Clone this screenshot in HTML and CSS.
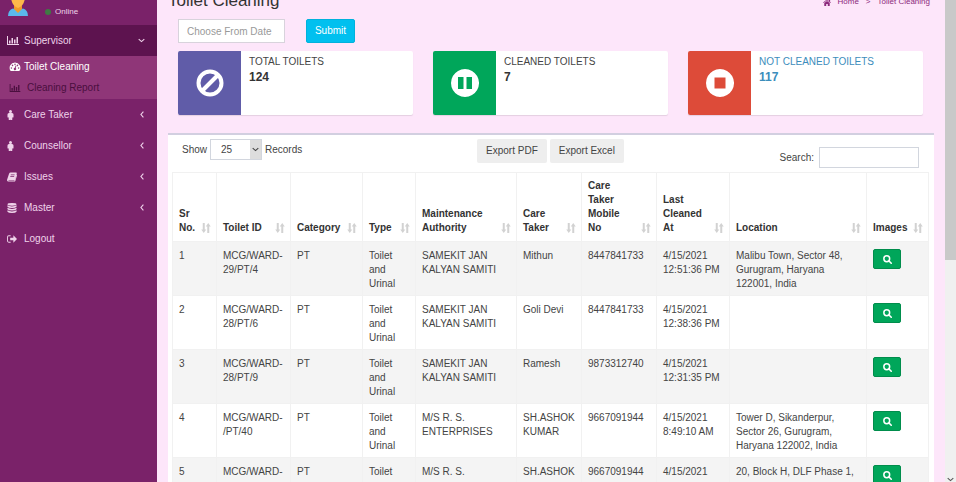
FILE: index.html
```html
<!DOCTYPE html>
<html lang="en">
<head>
<meta charset="utf-8">
<title>Toilet Cleaning</title>
<link rel="stylesheet" href="styles.css">
</head>
<body>
<svg class="sprite" aria-hidden="true">
  <symbol id="chart" viewBox="0 0 24 18"><path d="M0 0h2v16h22v2H0zM4 9h3v6H4zM9 4h3v11H9zM14 7h3v8h-3zM19 2h3v13h-3z"/></symbol>
  <symbol id="gauge" viewBox="0 0 24 20"><path fill-rule="evenodd" d="M12 1a12 12 0 0 1 10 18.500q-.3.500-1 .500H3q-.7 0-1-.500A12 12 0 0 1 12 1zM4 11.500a1.600 1.600 0 1 0 .01 0zM6.500 5.800a1.600 1.600 0 1 0 .01 0zM12 3.400a1.600 1.600 0 1 0 .01 0zM17.500 5.800a1.600 1.600 0 1 0 .01 0zM20 11.500a1.600 1.600 0 1 0 .01 0zM13.300 8l-1.700 5a2.600 2.600 0 1 0 2 .6l1.600-5z"/></symbol>
  <symbol id="person" viewBox="0 0 12 20"><circle cx="6" cy="3" r="3"/><path d="M3 6h6q3 0 3 3v5q0 1.200-1.200 1.200T9.600 14v5q0 1-1.700 1T6 19h0q0 1-1.900 1T2.400 19v-5q0 1.200-1.200 1.200T0 14V9q0-3 3-3z"/></symbol>
  <symbol id="book" viewBox="0 0 22 20"><path fill-rule="evenodd" d="M8 0h12q2 0 1.600 2l-3.500 12.500q-.5 2-2.500 2H4q-1.500 0-1 1h12.500q1.300 0 1.700-1.300L21 4.500q1.300 1 .8 2.500L18.500 18q-.6 2-2.700 2H3q-2.500 0-3-3 0-1 .5-2L4.500 3Q5.500 0 8 0zM8.500 4.500L8 6h8.500l.5-1.500zM7.500 8.500L7 10h8.500l.5-1.500z"/></symbol>
  <symbol id="database" viewBox="0 0 20 22"><ellipse cx="10" cy="3" rx="10" ry="3"/><path d="M0 5q3 2.500 10 2.500T20 5v3q-2 3-10 3T0 8zM0 10.500Q3 13 10 13t10-2.500v3q-2 3-10 3t-10-3zM0 16q3 2.500 10 2.500T20 16v3q-2 3-10 3T0 19z"/></symbol>
  <symbol id="logout" viewBox="0 0 22 18"><path d="M8 1v2H4Q2 3 2 5v8q0 2 2 2h4v2H4q-4 0-4-4V5q0-4 4-4zM14 1l8 8-8 8v-5H7V6h7z"/></symbol>
  <symbol id="left" viewBox="0 0 6 10"><path d="M5 1L1.500 5 5 9" fill="none" stroke="currentColor" stroke-width="1.600"/></symbol>
  <symbol id="down" viewBox="0 0 10 6"><path d="M1 1l4 3.500L9 1" fill="none" stroke="currentColor" stroke-width="1.600"/></symbol>
  <symbol id="home" viewBox="0 0 20 18"><path d="M10 1l10 8-1.200 1.400L10 3.500l-8.800 6.900L0 9zM10 5l7 5.500V18h-5v-5H8v5H3v-7.500zM15 1h3v6l-3-2.500z"/></symbol>
  <symbol id="sort" viewBox="0 0 20 20"><path d="M3.500 0h4v13h3l-5 7-5-7h3zM12.500 20h4V7h3l-5-7-5 7h3z"/></symbol>
  <symbol id="search" viewBox="0 0 18 18"><path d="M12 12l4.500 4.500" stroke="currentColor" stroke-width="3.200" stroke-linecap="round"/><circle cx="7.500" cy="7.500" r="5.800" fill="none" stroke="currentColor" stroke-width="3"/></symbol>
</svg>
<div class="app">
  <aside class="sidebar">
    <div class="user">
      <svg class="avatar" viewBox="0 0 22 24"><path d="M1 24q0-6 5-7.500l5 2 5-2q5 1.500 5 7.500z" fill="#5bb8ec"/><path d="M7 12h8v5l-4 4-4-4z" fill="#f09a2c"/><path d="M4 0h14v6q-1 8-7 10Q5 14 4 6z" fill="#fdb84a"/></svg>
      <span class="status"><i class="dot"></i>Online</span>
    </div>
    <nav>
      <a class="item open" href="#"><svg class="icon"><use href="#chart"/></svg>Supervisor<svg class="chevron"><use href="#down"/></svg></a>
      <div class="submenu">
        <a class="sub current" href="#"><svg class="icon"><use href="#gauge"/></svg>Toilet Cleaning</a>
        <a class="sub" href="#"><svg class="icon"><use href="#chart"/></svg>Cleaning Report</a>
      </div>
      <a class="item" href="#"><svg class="icon narrow"><use href="#person"/></svg>Care Taker<svg class="chevron"><use href="#left"/></svg></a>
      <a class="item" href="#"><svg class="icon narrow"><use href="#person"/></svg>Counsellor<svg class="chevron"><use href="#left"/></svg></a>
      <a class="item" href="#"><svg class="icon medium"><use href="#book"/></svg>Issues<svg class="chevron"><use href="#left"/></svg></a>
      <a class="item" href="#"><svg class="icon medium"><use href="#database"/></svg>Master<svg class="chevron"><use href="#left"/></svg></a>
      <a class="item" href="#"><svg class="icon medium"><use href="#logout"/></svg>Logout</a>
    </nav>
  </aside>
  <main>
    <header>
      <h1>Toilet Cleaning</h1>
      <div class="crumbs"><svg><use href="#home"/></svg><a href="#">Home</a><span>&gt;</span><a href="#">Toilet Cleaning</a></div>
    </header>
    <form class="filter">
      <input type="text" placeholder="Choose From Date" aria-label="Choose From Date">
      <button type="button">Submit</button>
    </form>
    <section class="cards">
      <div class="card">
        <div class="tile purple"><svg viewBox="0 0 28 28"><circle cx="14" cy="14" r="11.500" fill="none" stroke="#fff" stroke-width="4"/><path d="M6 22L22 6" stroke="#fff" stroke-width="4"/></svg></div>
        <div class="info"><span>TOTAL TOILETS</span><strong>124</strong></div>
      </div>
      <div class="card">
        <div class="tile green"><svg viewBox="0 0 28 28"><path fill="#fff" fill-rule="evenodd" d="M14 0a14 14 0 1 0 .01 0zM7 8h5.500v12H7zM15.500 8H21v12h-5.500z"/></svg></div>
        <div class="info"><span>CLEANED TOILETS</span><strong>7</strong></div>
      </div>
      <div class="card">
        <div class="tile red"><svg viewBox="0 0 28 28"><path fill="#fff" fill-rule="evenodd" d="M14 0a14 14 0 1 0 .01 0zM8.500 8.500h11v11h-11z"/></svg></div>
        <a class="info" href="#"><span>NOT CLEANED TOILETS</span><strong>117</strong></a>
      </div>
    </section>
    <section class="panel">
      <div class="tools">
        <label class="length">Show
          <span class="pick"><select><option>25</option><option>50</option></select><svg><use href="#down"/></svg></span>
          Records</label>
        <div class="exports"><button type="button">Export PDF</button><button type="button">Export Excel</button></div>
        <label class="find">Search:<input type="search"></label>
      </div>
      <table>
        <colgroup><col class="c-sr"><col class="c-id"><col class="c-cat"><col class="c-type"><col class="c-auth"><col class="c-care"><col class="c-mob"><col class="c-last"><col class="c-loc"><col class="c-img"></colgroup>
        <thead><tr>
          <th><div>Sr No.<svg><use href="#sort"/></svg></div></th>
          <th><div>Toilet ID<svg><use href="#sort"/></svg></div></th>
          <th><div>Category<svg><use href="#sort"/></svg></div></th>
          <th><div>Type<svg><use href="#sort"/></svg></div></th>
          <th><div>Maintenance Authority<svg><use href="#sort"/></svg></div></th>
          <th><div>Care Taker<svg><use href="#sort"/></svg></div></th>
          <th><div>Care Taker Mobile<br>No<svg><use href="#sort"/></svg></div></th>
          <th><div>Last Cleaned At<svg><use href="#sort"/></svg></div></th>
          <th><div>Location<svg><use href="#sort"/></svg></div></th>
          <th><div>Images<svg><use href="#sort"/></svg></div></th>
        </tr></thead>
        <tbody>
          <tr><td>1</td><td>MCG/WARD-<br>29/PT/4</td><td>PT</td><td>Toilet and Urinal</td><td>SAMEKIT JAN KALYAN SAMITI</td><td>Mithun</td><td>8447841733</td><td>4/15/2021 12:51:36 PM</td><td>Malibu Town, Sector 48, Gurugram, Haryana 122001, India</td><td><button type="button" aria-label="View images"><svg><use href="#search"/></svg></button></td></tr>
          <tr><td>2</td><td>MCG/WARD-<br>28/PT/6</td><td>PT</td><td>Toilet and Urinal</td><td>SAMEKIT JAN KALYAN SAMITI</td><td>Goli Devi</td><td>8447841733</td><td>4/15/2021 12:38:36 PM</td><td></td><td><button type="button" aria-label="View images"><svg><use href="#search"/></svg></button></td></tr>
          <tr><td>3</td><td>MCG/WARD-<br>28/PT/9</td><td>PT</td><td>Toilet and Urinal</td><td>SAMEKIT JAN KALYAN SAMITI</td><td>Ramesh</td><td>9873312740</td><td>4/15/2021 12:31:35 PM</td><td></td><td><button type="button" aria-label="View images"><svg><use href="#search"/></svg></button></td></tr>
          <tr><td>4</td><td>MCG/WARD-<br>/PT/40</td><td>PT</td><td>Toilet and Urinal</td><td>M/S R. S. ENTERPRISES</td><td>SH.ASHOK KUMAR</td><td>9667091944</td><td>4/15/2021 8:49:10 AM</td><td>Tower D, Sikanderpur, Sector 26, Gurugram, Haryana 122002, India</td><td><button type="button" aria-label="View images"><svg><use href="#search"/></svg></button></td></tr>
          <tr><td>5</td><td>MCG/WARD-</td><td>PT</td><td>Toilet</td><td>M/S R. S.</td><td>SH.ASHOK</td><td>9667091944</td><td>4/15/2021</td><td>20, Block H, DLF Phase 1,</td><td><button type="button" aria-label="View images"><svg><use href="#search"/></svg></button></td></tr>
        </tbody>
      </table>
    </section>
  </main>
  <div class="scroll"><div class="thumb"></div><svg><use href="#down"/></svg></div>
</div>
</body>
</html>
```
FILE: styles.css
```css
* { box-sizing: border-box; }
body {
  margin: 0;
  font: 10px/14px "Liberation Sans", Arial, sans-serif;
  color: #444;
  background: #fde6fa;
}
a { color: inherit; text-decoration: none; }
svg { fill: currentColor; flex: none; }
input, select, button { font: inherit; color: inherit; margin: 0; }
.sprite { position: absolute; width: 0; height: 0; }

.app {
  display: grid;
  grid-template-columns: 157px minmax(0, 1fr) 11px;
  grid-template-rows: minmax(0, 1fr);
  height: 100vh;
  overflow: hidden;
}

/* Sidebar */
.sidebar { background: #7a2269; color: #efd3ea; }
.user {
  display: flex;
  align-items: flex-end;
  gap: 16px;
  height: 25px;
  padding: 0 7px 9px;
  overflow: hidden;
}
.avatar { width: 22px; height: 24px; }
.status {
  display: flex;
  align-items: center;
  gap: 4px;
  font-size: 8px;
  line-height: 8px;
}
.dot { width: 6px; height: 6px; border-radius: 50%; background: #3f7a44; }
.item {
  display: flex;
  align-items: center;
  height: 31px;
  padding: 0 11px 0 7px;
}
.item .icon { width: 12px; height: 9px; margin-right: 5px; }
.item .narrow { width: 7px; height: 10px; margin-right: 10px; }
.item .medium { width: 10px; height: 10px; margin-right: 7px; }
.open { background: #5d134f; }
.chevron { width: 6px; height: 7px; margin-left: auto; margin-right: 1px; }
.open .chevron { width: 7px; height: 5px; }
.submenu { background: #8f3678; padding-bottom: 1px; }
.sub {
  display: flex;
  align-items: center;
  gap: 6px;
  height: 21px;
  padding-left: 9px;
  color: #4a0f3e;
}
.sub .icon { width: 12px; height: 8px; }
.current { gap: 3px; color: #fff; }
.current .icon { height: 9px; }

/* Heading and filter */
main { padding: 0 11px; min-width: 0; }
header {
  display: flex;
  justify-content: space-between;
  align-items: flex-end;
  height: 9px;
  padding-right: 4px;
}
h1 { margin: 0; font-size: 17px; line-height: 17px; font-weight: normal; color: #333; }
.crumbs { display: flex; align-items: center; gap: 7px; font-size: 8px; line-height: 14px; color: #8c2a7c; }
.crumbs svg { width: 8px; height: 7px; }
.filter { display: flex; gap: 21px; padding: 10px 10px 8px; }
.filter input {
  width: 107px;
  height: 24px;
  padding: 0 8px;
  border: 1px solid #d8d3dc;
  background: #fff;
}
.filter input::placeholder { color: #999; }
.filter button {
  width: 49px;
  height: 24px;
  padding: 0;
  border: 1px solid #00b2dc;
  border-radius: 2px;
  background: #00c0ef;
  color: #fff;
}

/* Summary cards */
.cards {
  display: grid;
  grid-template-columns: repeat(3, 1fr);
  gap: 20px;
  padding: 0 11px 0 10px;
}
.card {
  display: flex;
  height: 64px;
  background: #fff;
  border-radius: 2px;
  overflow: hidden;
  box-shadow: 0 1px 1px rgba(0, 0, 0, .1);
}
.tile { display: flex; align-items: center; justify-content: center; width: 63px; flex: none; }
.tile svg { width: 28px; height: 28px; }
.purple { background: #605ca8; }
.green { background: #00a65a; }
.red { background: #dd4b39; }
.info { display: flex; flex-direction: column; padding: 4px 8px; color: #444; }
.info strong { font-size: 12px; line-height: 16px; color: #333; }
a.info, a.info strong { color: #3c8dbc; }

/* Records panel */
.panel {
  margin-top: 18px;
  padding: 4px 5px 0 4px;
  border-top: 2px solid #d2cfe0;
  background: #fff;
}
.tools { display: grid; grid-template-columns: 1fr auto 1fr; height: 33px; }
.length { display: flex; align-items: center; gap: 3px; height: 21px; padding-left: 10px; }
.pick { position: relative; display: flex; }
.pick select {
  appearance: none;
  width: 52px;
  height: 21px;
  padding: 0 10px;
  border: 1px solid #d2d6de;
  border-radius: 0;
  background: linear-gradient(#ddd, #ddd) right / 11px 100% no-repeat #fff;
}
.pick svg { position: absolute; right: 3px; top: 8px; width: 7px; height: 5px; }
.exports { display: flex; gap: 3px; }
.exports button {
  height: 24px;
  padding: 0 9px;
  border: 0;
  border-radius: 2px;
  background: #eee;
}
.find { display: flex; align-items: center; justify-content: flex-end; gap: 5px; height: 21px; margin-top: 8px; padding-right: 10px; }
.find input { width: 100px; height: 21px; border: 1px solid #d2d6de; background: #fff; }

table { width: 100%; table-layout: fixed; border-collapse: collapse; }
.c-sr { width: 44px; }
.c-id { width: 74px; }
.c-cat { width: 72px; }
.c-type { width: 53px; }
.c-auth { width: 101px; }
.c-care { width: 65px; }
.c-mob { width: 75px; }
.c-last { width: 73px; }
.c-loc { width: 137px; }
.c-img { width: 62px; }
th, td { border: 1px solid #f1f1f1; text-align: left; }
th { position: relative; padding: 6px 19px 6px 6px; vertical-align: bottom; color: #333; }
th svg { position: absolute; right: 5px; bottom: 8px; width: 10px; height: 10px; color: #d2d2d2; }
td { height: 54px; padding: 7px 5px 4px 6px; vertical-align: top; }
tbody tr:nth-child(odd) { background: #f4f4f4; }
td button {
  display: flex;
  align-items: center;
  justify-content: center;
  width: 28px;
  height: 20px;
  padding: 0;
  border: 1px solid #008d4c;
  border-radius: 2px;
  background: #00a65a;
  color: #fff;
}
td button svg { width: 9px; height: 9px; }

/* Scroll track */
.scroll {
  display: flex;
  flex-direction: column;
  justify-content: space-between;
  align-items: center;
  background: #f0f0f0;
  color: #555;
}
.thumb { width: 100%; height: 54%; background: #c9c9c9; }
.scroll svg { width: 7px; height: 5px; }
```
